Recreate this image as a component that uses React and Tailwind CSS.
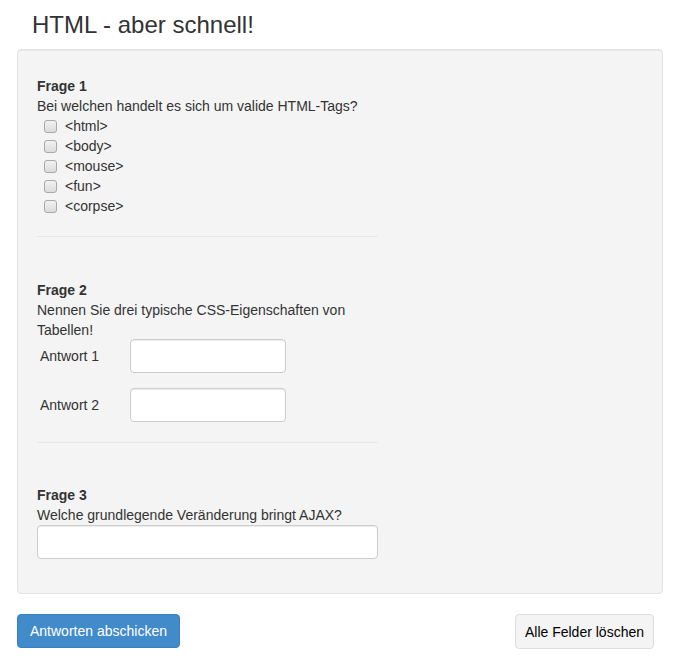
import React from 'react';

const tags = ['<html>', '<body>', '<mouse>', '<fun>', '<corpse>'];

function TextInput({ className }) {
  return (
    <input
      type="text"
      className={`h-[34px] rounded border border-[#cccccc] bg-white px-3 text-sm shadow-[inset_0_1px_1px_rgba(0,0,0,0.075)] outline-none ${className}`}
    />
  );
}

export default function App() {
  return (
    <div className="min-h-[661px] bg-white text-[14px] leading-5 text-[#333333]" style={{ fontFamily: '"Liberation Sans", Arial, sans-serif' }}>
      <div className="pl-[17px] pr-[20px] pt-[10px]">
        <h1 className="ml-[15px] text-[24px] leading-[30px] text-[#333333]">HTML - aber schnell!</h1>

        <form className="mt-[9px]">
          <div className="rounded border border-[#e3e3e3] bg-[#f4f4f4] px-[19px] pb-[34px] pt-[26px] shadow-[inset_0_1px_1px_rgba(0,0,0,0.05)]">
            <div className="w-[341px]">
              {/* Frage 1 */}
              <div className="font-bold">Frage 1</div>
              <div>Bei welchen handelt es sich um valide HTML-Tags?</div>
              <div>
                {tags.map((t) => (
                  <label key={t} className="flex h-5 items-center">
                    <span className="ml-[7px] h-[13px] w-[13px] rounded-[3px] border border-[#a9a9a9] bg-gradient-to-b from-[#f2f2f2] to-[#dcdcdc]" />
                    <span className="ml-[8px]">{t}</span>
                  </label>
                ))}
              </div>
              <hr className="mb-[43px] mt-[20px] border-t border-[#e8e8e8]" />

              {/* Frage 2 */}
              <div className="font-bold">Frage 2</div>
              <div className="-mb-px w-[320px]">Nennen Sie drei typische CSS-Eigenschaften von Tabellen!</div>
              <div className="flex items-center">
                <span className="w-[93px] pl-[3px]">Antwort 1</span>
                <TextInput className="w-[156px]" />
              </div>
              <div className="mt-[15px] flex items-center">
                <span className="w-[93px] pl-[3px]">Antwort 2</span>
                <TextInput className="w-[156px]" />
              </div>
              <hr className="mb-[42px] mt-[20px] border-t border-[#e8e8e8]" />

              {/* Frage 3 */}
              <div className="font-bold">Frage 3</div>
              <div>Welche grundlegende Veränderung bringt AJAX?</div>
              <TextInput className="w-[341px]" />
            </div>
          </div>

          <div className="mt-[20px] flex items-start justify-between pr-[9px]">
            <button type="button" className="h-[34px] rounded border border-[#3a7fc0] bg-[#428bca] px-3 text-white">
              Antworten abschicken
            </button>
            <button type="button" className="h-[35px] rounded border border-[#dddddd] bg-[#f4f4f4] px-[9px] text-black">
              Alle Felder löschen
            </button>
          </div>
        </form>
      </div>
    </div>
  );
}
